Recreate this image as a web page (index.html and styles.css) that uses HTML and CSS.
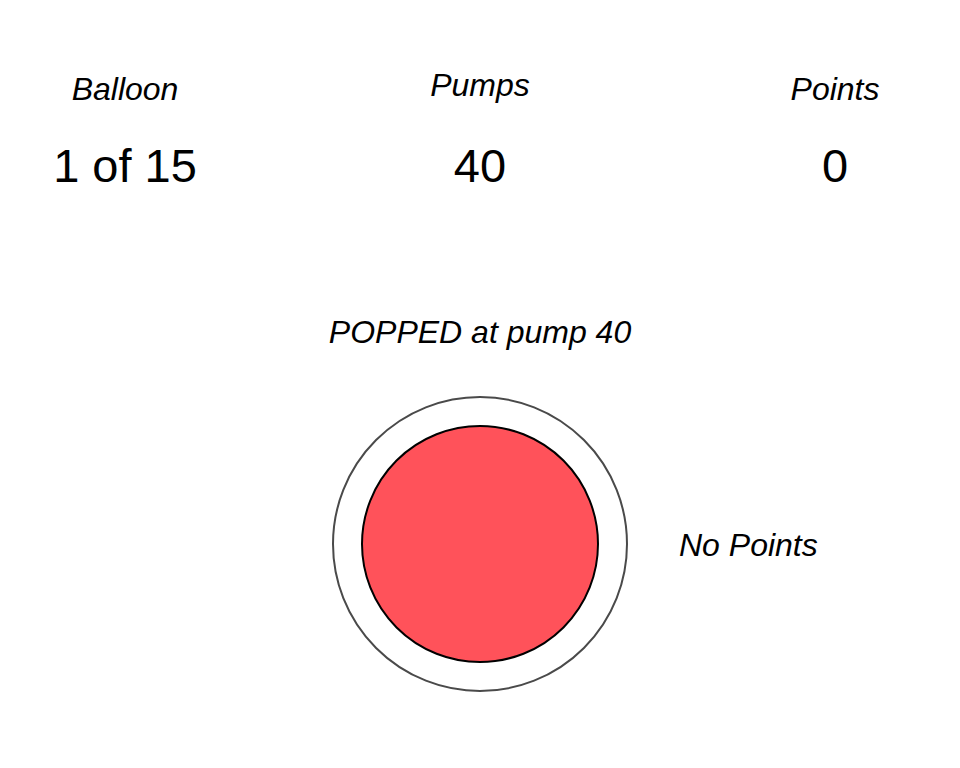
FILE: index.html
```html
<!DOCTYPE html>
<html lang="en">
<head>
<meta charset="utf-8">
<title>Balloon Task</title>
<link rel="stylesheet" href="styles.css">
</head>
<body>
<main class="task">
  <section class="stats">
    <div class="stat">
      <div class="stat-label">Balloon</div>
      <div class="stat-value">1 of 15</div>
    </div>
    <div class="stat">
      <div class="stat-label stat-label-raised">Pumps</div>
      <div class="stat-value">40</div>
    </div>
    <div class="stat">
      <div class="stat-label">Points</div>
      <div class="stat-value">0</div>
    </div>
  </section>
  <div class="status">POPPED at pump 40</div>
  <section class="balloon-row">
    <div class="spacer"></div>
    <div class="ring">
      <div class="balloon"></div>
    </div>
    <div class="result">No Points</div>
  </section>
</main>
</body>
</html>
```

FILE: styles.css
```css
html, body {
  margin: 0;
  padding: 0;
  background: #ffffff;
}

body {
  font-family: "Liberation Sans", Arial, sans-serif;
  color: #000000;
  width: 960px;
  height: 768px;
  overflow: hidden;
}

.task {
  display: flex;
  flex-direction: column;
}

.stats {
  display: flex;
  justify-content: space-between;
  padding-top: 70px;
}

.stat {
  width: 250px;
  display: flex;
  flex-direction: column;
  align-items: center;
}

.stat-label {
  font-style: italic;
  font-size: 32px;
  line-height: 38px;
  height: 38px;
}

.stat-label-raised {
  margin-top: -4px;
  margin-bottom: 4px;
}

.stat-value {
  font-size: 47px;
  line-height: 56px;
  margin-top: 30px;
}

.status {
  font-style: italic;
  font-size: 32px;
  line-height: 38px;
  text-align: center;
  margin-top: 119px;
}

.balloon-row {
  display: grid;
  grid-template-columns: 1fr 296px 1fr;
  align-items: center;
  margin-top: 45px;
}

.ring {
  box-sizing: border-box;
  width: 296px;
  height: 296px;
  border: 2px solid #4a4a4a;
  border-radius: 50%;
  display: flex;
  align-items: center;
  justify-content: center;
}

.balloon {
  box-sizing: border-box;
  width: 238px;
  height: 238px;
  border: 2px solid #000000;
  border-radius: 50%;
  background: #ff525a;
}

.result {
  font-style: italic;
  font-size: 32px;
  line-height: 38px;
  padding-left: 51px;
  padding-top: 2px;
}
```
